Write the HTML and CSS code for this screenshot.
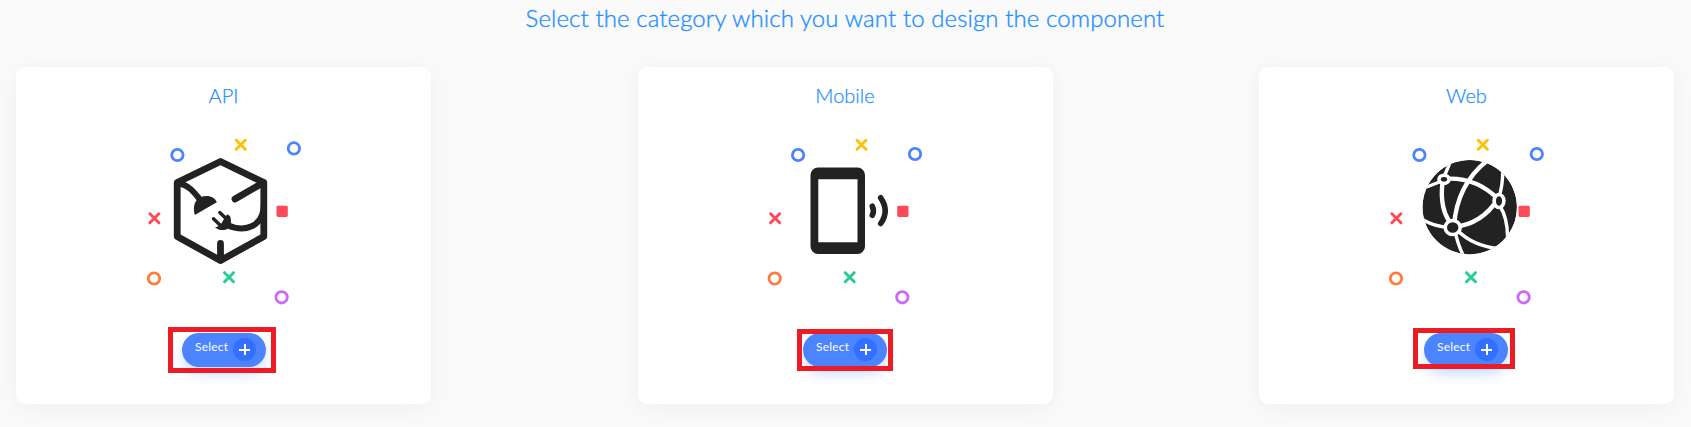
FILE: index.html
```html
<!DOCTYPE html>
<html lang="en">
<head>
<meta charset="utf-8">
<title>Select category</title>
<link rel="stylesheet" href="styles.css">
</head>
<body>
<svg class="defs" aria-hidden="true">
  <defs>
    <g id="cross" fill="none" stroke-width="3" stroke-linecap="round"><path d="M-4.500-4.500 4.500 4.500M4.500-4.500-4.500 4.500"/></g>
    <g id="confetti">
      <g fill="none" stroke-width="2.800">
        <circle cx="47.400" cy="35" r="5.700" stroke="#4c84ff"/>
        <circle cx="24" cy="158.500" r="5.700" stroke="#ff7b3d"/>
        <circle cx="151.600" cy="177.300" r="5.700" stroke="#cb68ff"/>
      </g>
      <use href="#cross" x="110.800" y="24.800" stroke="#ffc107"/>
      <use href="#cross" x="24.400" y="98.300" stroke="#fe4a57"/>
      <use href="#cross" x="99" y="157.200" stroke="#29cc97"/>
      <rect x="146.500" y="85.700" width="11.300" height="11.300" rx="1.400" fill="#fe4a57"/>
    </g>
    <clipPath id="globe"><circle cx="99.700" cy="87.200" r="47.200"/></clipPath>
  </defs>
</svg>
<main class="page">
  <h1 class="title"><span>Select the category which you want to design the component</span></h1>
  <section class="cards">
    <article class="card">
      <h2 class="name">API</h2>
      <svg class="art" viewBox="-114 0 415 200">
        <use href="#confetti"/>
        <circle cx="163.900" cy="28.400" r="5.700" fill="none" stroke="#4c84ff" stroke-width="2.800"/>
        <g fill="none" stroke="#222" stroke-width="6.800" stroke-linejoin="round" stroke-linecap="round">
          <path d="M90.500 41.500 133.800 62.500V116.500L90.500 140.500 47.200 116.500V62.500Z"/>
          <path d="M90.500 123.500V140M105 79 133.500 62.500"/>
          <path d="M49 63.500C58 65 63 71 69.500 79M134 83C134 107 115 113 97 105" stroke-width="6"/>
        </g>
        <path d="M64.800 95C62.500 86 65 79.500 70.500 77.500 77 74.500 84.500 76.500 86.800 82.300Z" fill="#222"/>
        <path d="M85 107.200C88 107 91 105.200 92 102.500 93.500 99.500 95.500 97.500 97 94.300L100 96C102 102 101 106 98 108.500 94 111 89 110.500 85 107.200Z" fill="#222"/>
        <path d="M89.800 92.500 96 98.500M83.500 98.800 90.500 105.500" stroke="#222" stroke-width="3.400" stroke-linecap="round"/>
      </svg>
      <div class="action action-api"><span class="button"><span class="label">Select</span><span class="plus"></span></span><i class="frame"></i></div>
    </article>
    <article class="card">
      <h2 class="name">Mobile</h2>
      <svg class="art" viewBox="-112 0 415 200">
        <use href="#confetti" x=".7"/>
        <circle cx="165" cy="34" r="5.700" fill="none" stroke="#4c84ff" stroke-width="2.800"/>
        <path fill="#222" fill-rule="evenodd" d="M68 47.500H107.500a7.500 7.500 0 0 1 7.500 7.500V126.500a7.500 7.500 0 0 1-7.500 7.500H68a7.500 7.500 0 0 1-7.500-7.500V55a7.500 7.500 0 0 1 7.500-7.500ZM68.300 59.300V122.200H107.500V59.300Z"/>
        <path d="M122.300 86.200Q124.500 90.800 122.300 95.300M130.700 77.800Q139.700 90.800 130.700 103.500" fill="none" stroke="#222" stroke-width="5.600" stroke-linecap="round"/>
      </svg>
      <div class="action action-mobile"><span class="button"><span class="label">Select</span><span class="plus"></span></span><i class="frame"></i></div>
    </article>
    <article class="card">
      <h2 class="name">Web</h2>
      <svg class="art" viewBox="-111 0 415 200">
        <use href="#confetti" x="2"/>
        <circle cx="166.800" cy="34" r="5.700" fill="none" stroke="#4c84ff" stroke-width="2.800"/>
        <g clip-path="url(#globe)">
          <circle cx="99.700" cy="87.200" r="47.200" fill="#222"/>
          <g fill="none" stroke="#fff" stroke-width="4.400">
            <path d="M73 59Q105 56 128 79Q112 104 84 107Q68 91 73 59Z"/>
            <path d="M84 106Q87 64 118 40"/>
            <path d="M81 40 74 57M72 61 54 68" stroke-width="3.400"/>
            <path d="M132.500 47Q133.500 63 129 77M130 86Q138 99 137.500 119M50 98Q64 107 80 107.500M85 110Q87 123 94 137M87 110Q103 126 128 128.500" stroke-width="3.400"/>
          </g>
          <g fill="#222" stroke="#fff" stroke-width="3.600">
            <ellipse cx="74" cy="59.300" rx="5" ry="4.100"/>
            <ellipse cx="129" cy="81" rx="4.900" ry="6.500"/>
            <ellipse cx="82.700" cy="107.500" rx="7.500" ry="7"/>
          </g>
        </g>
      </svg>
      <div class="action action-web"><span class="button"><span class="label">Select</span><span class="plus"></span></span><i class="frame"></i></div>
    </article>
  </section>
</main>
</body>
</html>
```
FILE: styles.css
```css
* { box-sizing: border-box; }
body { margin: 0; background: #fafafa; font-family: Lato, sans-serif; color: #1e90ff; overflow: hidden; }
.defs { position: absolute; width: 0; height: 0; }
.page { height: 427px; padding: 0 17px 0 16px; }
.title { margin: 0; height: 67px; padding-top: 3px; text-align: center; font-size: 24px; line-height: 30px; font-weight: 300; letter-spacing: .1px; -webkit-text-stroke: .35px #1e90ff; }
.cards { display: flex; justify-content: space-between; }
.card { width: 415px; height: 337px; background: #fff; border-radius: 9px; box-shadow: 0 4px 24px rgba(0, 0, 0, .05); display: flex; flex-direction: column; align-items: center; }
.name { margin: 0; height: 53px; padding-top: 16px; font-size: 20px; line-height: 25px; font-weight: 300; -webkit-text-stroke: .25px #1e90ff; }
.art { display: block; width: 415px; height: 200px; }
.action { position: relative; width: 84px; height: 34px; margin-top: 13px; }
.action-api { margin-left: 1px; }
.action-web { margin-right: 1px; }
.button { display: flex; width: 84px; height: 34px; padding: 5px 10px 6px 13px; justify-content: space-between; border-radius: 17px; background: #4c84ff; box-shadow: 0 8px 14px -3px rgba(76, 132, 255, .38); color: #fff; }
.label { font-size: 12px; line-height: 18px; letter-spacing: .2px; }
.plus { width: 23px; height: 23px; border-radius: 50%; background: linear-gradient(#fff, #fff) center / 11px 2px no-repeat, linear-gradient(#fff, #fff) center / 2px 11px no-repeat, #3370ff; }
.frame { position: absolute; border: 5px solid #ed1c24; }
.action-api .frame { left: -14px; top: -6px; width: 108px; height: 46px; }
.action-mobile .frame { left: -6px; top: -4px; width: 96px; height: 42px; }
.action-web .frame { left: -11px; top: -5px; width: 102px; height: 41px; }
```
